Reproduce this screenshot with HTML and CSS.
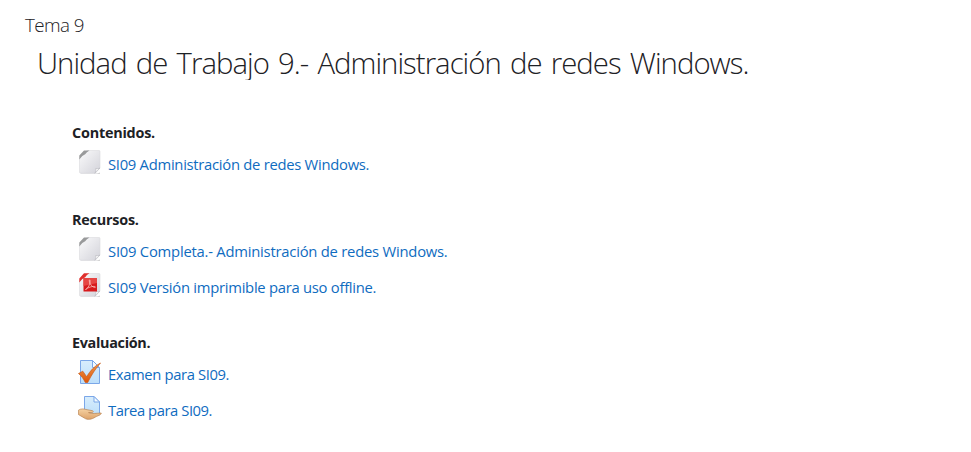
FILE: index.html
```
<!DOCTYPE html>
<html lang="es">
<head>
<meta charset="utf-8">
<title>Tema 9</title>
<link rel="stylesheet" href="styles.css">
</head>
<body>
<svg class="defs" width="0" height="0" aria-hidden="true">
  <defs>
    <linearGradient id="paper" x1="0" y1="0" x2="1" y2="1"><stop offset="0" stop-color="#fafafb"/><stop offset="1" stop-color="#d3d3da"/></linearGradient>
    <linearGradient id="sheet" x1="0" y1="0" x2="0" y2="1"><stop offset="0" stop-color="#d8edfc"/><stop offset="1" stop-color="#bcdffb"/></linearGradient>
    <linearGradient id="tick" x1="0" y1="0" x2="0" y2="1"><stop offset="0" stop-color="#ee9a50"/><stop offset="1" stop-color="#de5607"/></linearGradient>
    <linearGradient id="skin" x1="0" y1="0" x2="0" y2="1"><stop offset="0" stop-color="#f5d1a2"/><stop offset="1" stop-color="#dda36a"/></linearGradient>
    <g id="page">
      <path d="M3 23.5H19L22 22.5V24H3Z" fill="#d4d4d5"/>
      <path d="M9 .5H21Q22 .5 22 1.5V18L17 23.2H2.3Q1.5 23 1.5 22V8Z" fill="url(#paper)" stroke="#dadade" stroke-width=".6"/>
      <path d="M17 23.2Q18.5 20.5 17.7 18.5Q20 19.4 22 18Z" fill="#fff" stroke="#bbbbc1" stroke-width=".7"/>
    </g>
  </defs>
</svg>
<main class="section">
  <h3 class="section-name">Tema 9</h3>
  <h2 class="unit">Unidad de Trabajo 9.- Administración de redes Windows.</h2>
  <div class="groups">
    <section class="group">
      <h4 class="label contents">Contenidos.</h4>
      <ul class="items">
        <li class="item"><svg class="icon" viewBox="0 0 24 24"><use href="#page"/><path d="M6 .5H11.5Q8.5 2 7.2 4.3Q3 6 1.3 9.5V5.5Z" fill="#999a9b"/></svg><a class="link l1" href="#">SI09 Administración de redes Windows.</a></li>
      </ul>
    </section>
    <section class="group">
      <h4 class="label resources">Recursos.</h4>
      <ul class="items">
        <li class="item"><svg class="icon" viewBox="0 0 24 24"><use href="#page"/><path d="M6 .5H11.5Q8.5 2 7.2 4.3Q3 6 1.3 9.5V5.5Z" fill="#999a9b"/></svg><a class="link l2" href="#">SI09 Completa.- Administración de redes Windows.</a></li>
        <li class="item"><svg class="icon" viewBox="0 0 24 24"><use href="#page"/><path d="M6 .3H11.5Q8.5 2 7.2 4.3Q3 6 1.3 9.5V5.5Z" fill="#e0302e"/><rect x="5.5" y="5" width="13.5" height="13.5" fill="#d7191c"/><path d="M5.5 5H19V10L5.5 13Z" fill="#e64543"/><path d="M7.5 16.5C10 15.5 12.7 10.5 12 7.3C11.2 5.8 10.8 8.2 12.2 10.7C13.5 13.2 16 15 17.4 14.3C18.1 12.9 12.5 12.8 7.5 16.5Z" fill="none" stroke="#ffd0cc" stroke-width=".7"/></svg><a class="link l3" href="#">SI09 Versión imprimible para uso offline.</a></li>
      </ul>
    </section>
    <section class="group">
      <h4 class="label tests">Evaluación.</h4>
      <ul class="items">
        <li class="item"><svg class="icon" viewBox="0 0 24 24"><path d="M2.5.5H14.5L21.5 7.5V23.5H2.5Z" fill="url(#sheet)" stroke="#7ba7e8"/><path d="M14.5.5V7.5H21.5Z" fill="#f2faff" stroke="#7ba7e8"/><path d="M.5 13.5L4.8 11.2L8.6 16.7C12.5 10.5 16 6.5 22.5 3C17.5 8.5 13.5 15 9.7 22.5H7.3C5.6 18.8 3.4 16 .5 13.5Z" fill="url(#tick)" stroke="#c95b1b" stroke-width=".7"/></svg><a class="link l4" href="#">Examen para SI09.</a></li>
        <li class="item"><svg class="icon" viewBox="0 0 24 24"><path d="M6.5.5H16L21.5 6V19H6.5Z" fill="url(#sheet)" stroke="#7ba7e8"/><path d="M16 .5V6H21.5Z" fill="#f2faff" stroke="#7ba7e8"/><path d="M.4 14.2C3 12.5 5.5 12.7 9 13.7L14.5 14.7Q16.4 15.5 14.3 16.4L10.5 16.6C14 18.2 18.5 17.2 23.2 17C23.8 18.4 20 19.8 17.5 21C13.5 23.5 9.5 24.3 6.3 22L.4 18.5Z" fill="url(#skin)" stroke="#b98250" stroke-width=".7"/></svg><a class="link l5" href="#">Tarea para SI09.</a></li>
      </ul>
    </section>
  </div>
</main>
</body>
</html>
```
FILE: styles.css
```
* { box-sizing: border-box; }
body {
  margin: 0;
  background: #fff;
  color: #1d2125;
  font-family: "Open Sans", "Noto Sans", sans-serif;
  font-size: 15px;
}
h2, h3, h4, ul { margin: 0; padding: 0; }
.defs { display: block; }
.section { padding: 11px 25px 0; }
.section-name {
  font-size: 18.8px;
  font-weight: 300;
  line-height: 28px;
  letter-spacing: -0.55px;
}
.unit {
  margin: 5px 0 0 12px;
  height: 36px;
  overflow: hidden;
  font-size: 29.3px;
  font-weight: 300;
  line-height: 38px;
  letter-spacing: -0.96px;
  word-spacing: 2.5px;
  white-space: nowrap;
}
.groups {
  display: flex;
  flex-direction: column;
  gap: 23px;
  padding: 39px 0 0 47px;
}
.label {
  font-size: 14.4px;
  font-weight: 700;
  line-height: 28px;
  letter-spacing: -0.22px;
}
.tests { letter-spacing: -0.32px; }
.items { list-style: none; }
.item {
  display: flex;
  align-items: center;
  gap: 6px;
  height: 36px;
  padding-left: 6px;
}
.icon {
  width: 24px;
  height: 24px;
  flex: none;
  margin-bottom: 6px;
}
.link {
  margin-bottom: 2px;
  color: #0f6cbf;
  font-size: 14.8px;
  line-height: 24px;
  text-decoration: none;
  white-space: nowrap;
}
.l1 { letter-spacing: -0.28px; }
.l2 { letter-spacing: -0.23px; }
.l3 { letter-spacing: -0.27px; }
.l4 { letter-spacing: -0.38px; }
.l5 { letter-spacing: -0.45px; }
```
